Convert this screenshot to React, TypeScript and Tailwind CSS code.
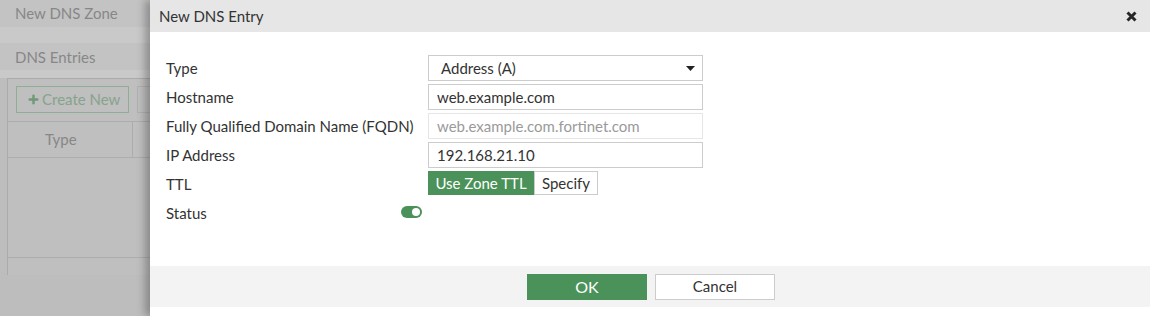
import { Plus } from "lucide-react";

const fieldBox =
  "h-[26px] w-[275px] border border-[#cccccc] bg-white px-[8px] flex items-center text-[15px] text-[#333333]";

function Row({ label, children }: { label: string; children: React.ReactNode }) {
  return (
    <div className="flex items-center h-[26px]">
      <div className="w-[262px] text-[15px] text-[#333333]">{label}</div>
      {children}
    </div>
  );
}

export default function App() {
  return (
    <div
      className="relative w-full h-[316px] overflow-hidden bg-[#bdbdbd]"
      style={{ fontFamily: "Lato, 'Open Sans', sans-serif" }}
    >
      {/* Page behind the dialog (dimmed) */}
      <div className="flex flex-col bg-[#c9c9c9] text-[#878787]">
        <div className="h-[27px] bg-[#c3c3c3] px-[15px] flex items-center text-[15px]">New DNS Zone</div>
        <div className="h-[16px]" />
        <div className="h-[27px] bg-[#c3c3c3] px-[15px] flex items-center text-[15px] pt-[2px]">DNS Entries</div>
        <div className="h-[8px]" />
      </div>
      <div className="ml-[7px] h-[197px] border-l border-t border-[#ababab] bg-[#bfbfbf] flex flex-col">
        <div className="h-[42px] flex items-start gap-[8px] pl-[8px] pt-[7px]">
          <div className="h-[27px] w-[113px] border border-[#8fae96] flex items-center gap-[2px] pl-[10px] text-[15px] text-[#86a38c]">
            <Plus className="w-[13px] h-[13px] text-[#6f9a78]" strokeWidth={4.5} />
            <span>Create New</span>
          </div>
          <div className="h-[27px] w-[40px] border border-[#b0b0b0]" />
        </div>
        <div className="h-[37px] border-t border-b border-[#adadad] flex">
          <div className="w-[125px] border-r border-[#adadad] flex items-center pl-[37px] text-[15px] text-[#878787]">
            Type
          </div>
        </div>
        <div className="h-[100px] border-b border-[#adadad]" />
        <div className="flex-1" />
      </div>

      {/* Dialog */}
      <div className="absolute top-0 bottom-0 left-[150px] right-0 bg-white flex flex-col shadow-[-5px_0_8px_rgba(0,0,0,0.28)]">
        <div className="h-[32px] bg-[#e6e6e6] flex items-center justify-between pl-[9px] pr-[13px] shrink-0">
          <span className="text-[15px] text-[#333333]">New DNS Entry</span>
          <svg width="11" height="11" viewBox="0 0 11 11">
            <path d="M1.5 1.5 L9.5 9.5 M9.5 1.5 L1.5 9.5" stroke="#262626" strokeWidth="3" strokeLinecap="butt" />
          </svg>
        </div>

        <div className="flex-1 pt-[23px] pl-[16px] flex flex-col gap-[3px]">
          <Row label="Type">
            <div className={fieldBox + " justify-between"}>
              <span className="pl-[4px]">Address (A)</span>
              <svg width="9" height="5" viewBox="0 0 9 5" className="mr-[-1px]">
                <path d="M0 0 H9 L4.5 5 Z" fill="#222222" />
              </svg>
            </div>
          </Row>
          <Row label="Hostname">
            <div className={fieldBox}>web.example.com</div>
          </Row>
          <Row label="Fully Qualified Domain Name (FQDN)">
            <div className="h-[26px] w-[275px] border border-[#e6e6e6] bg-white px-[8px] flex items-center text-[15px] text-[#9a9a9a]">
              web.example.com.fortinet.com
            </div>
          </Row>
          <Row label="IP Address">
            <div className={fieldBox}>192.168.21.10</div>
          </Row>
          <Row label="TTL">
            <div className="flex h-[24px] self-start">
              <div className="w-[106px] bg-[#4a9259] text-white text-[15px] flex items-center justify-center">
                Use Zone TTL
              </div>
              <div className="w-[64px] border border-[#cccccc] text-[15px] text-[#333333] flex items-center justify-center">
                Specify
              </div>
            </div>
          </Row>
          <div className="flex items-center h-[26px]">
            <div className="w-[256px] flex items-center justify-between text-[15px] text-[#333333]">
              <span>Status</span>
              <span className="w-[21px] h-[12px] rounded-full bg-[#4a9259] flex items-center justify-end pr-[2px] mt-[-3px]">
                <span className="w-[8px] h-[8px] rounded-full bg-white" />
              </span>
            </div>
          </div>
        </div>

        <div className="h-[41px] bg-[#f3f3f3] flex items-center justify-center gap-[8px] pl-[2px] shrink-0">
          <div className="w-[120px] h-[26px] bg-[#4a9259] text-white text-[16px] flex items-center justify-center">OK</div>
          <div className="w-[120px] h-[26px] bg-white border border-[#cccccc] text-[#333333] text-[15px] flex items-center justify-center">
            Cancel
          </div>
        </div>
        <div className="h-[9px] shrink-0" />
      </div>
    </div>
  );
}
